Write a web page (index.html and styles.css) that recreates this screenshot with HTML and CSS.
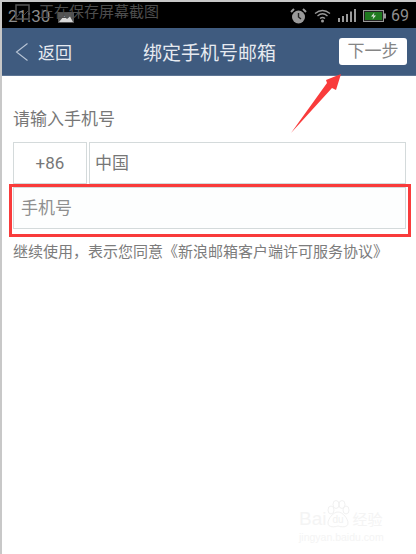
FILE: index.html
```html
<!DOCTYPE html>
<html lang="zh">
<head>
  <meta charset="UTF-8">
  <title>绑定手机号邮箱</title>
  <link rel="stylesheet" href="styles.css">
</head>
<body>
  <div class="screen">
    <div class="status-bar">
      <div class="status-left">
        <span class="clock">21:30</span>
        <svg class="pic-icon" width="16" height="11" viewBox="0 0 16 11">
          <rect x="0" y="0" width="16" height="11" fill="#555"/>
          <path d="M1 10 L6 4 L9 7 L12 4.500 L15 10 Z" fill="#d8d8d8"/>
        </svg>
      </div>
      <div class="toast">
        <svg class="toast-icon" width="15" height="16" viewBox="0 0 15 16">
          <rect x="1" y="1" width="13" height="14" fill="none" stroke="#555" stroke-width="1.500"/>
          <path d="M2 13 L6 8 L9 11 L13 7" fill="none" stroke="#444"/>
        </svg>
        <span>正在保存屏幕截图</span>
      </div>
      <div class="status-right">
        <svg width="17" height="16" viewBox="0 0 17 16">
          <circle cx="8.500" cy="9" r="6.500" fill="#9a9a9a"/>
          <path d="M8.500 5 V9 L11 11" fill="none" stroke="#222" stroke-width="1.400"/>
          <path d="M1 4 L4 1 M16 4 L13 1" stroke="#9a9a9a" stroke-width="2"/>
        </svg>
        <svg width="17" height="14" viewBox="0 0 17 14">
          <path d="M1 4.500 Q8.500 -1.500 16 4.500 M3.500 7 Q8.500 2.500 13.500 7 M6 9.500 Q8.500 7.500 11 9.500" fill="none" stroke="#9a9a9a" stroke-width="1.300"/>
          <circle cx="8.500" cy="12" r="1.500" fill="#9a9a9a"/>
        </svg>
        <svg width="18" height="13" viewBox="0 0 18 13">
          <path d="M0 9h2v4h-2z M4 7h2v6h-2z M8 5h2v8h-2z M12 2.500h2v10.500h-2z M16 0h2v13h-2z" fill="#9a9a9a"/>
        </svg>
        <svg width="23" height="12" viewBox="0 0 23 12">
          <rect x="0.500" y="0.500" width="20" height="11" fill="#222" stroke="#999"/>
          <rect x="2" y="2" width="17" height="8" fill="#1f7a1f"/>
          <rect x="21" y="3.500" width="2" height="5" fill="#999"/>
          <path d="M11.500 2.500 L8 6.500 H10.500 L9.500 9.500 L13 5.500 H10.500 Z" fill="#e8e8e8"/>
        </svg>
        <span class="battery-num">69</span>
      </div>
    </div>

    <div class="top-bar">
      <div class="back">
        <svg width="14" height="20" viewBox="0 0 14 20">
          <path d="M12.500 1.500 L1.500 10 L12.500 18.500" fill="none" stroke="#b9c5d5" stroke-width="1.100"/>
        </svg>
        <span>返回</span>
      </div>
      <div class="title">绑定手机号邮箱</div>
      <div class="next-btn">下一步</div>
    </div>

    <div class="content">
      <p class="label">请输入手机号</p>
      <div class="country-row">
        <div class="field code">+86</div>
        <div class="field country">中国</div>
      </div>
      <div class="field phone">手机号</div>
      <p class="agree">继续使用，表示您同意《新浪邮箱客户端许可服务协议》</p>
    </div>

    <div class="red-box"></div>
    <svg class="arrow" width="54" height="64" viewBox="0 0 54 64">
      <path d="M1 61 L37 11 L36 8 L51 2 L46 18 L42 16 Z" fill="#f93b3b"/>
    </svg>

    <div class="watermark">
      <div class="wm-top">
        <span class="wm-logo">Bai</span>
        <svg class="wm-paw" width="24" height="28" viewBox="0 0 24 28">
          <ellipse cx="5" cy="10" rx="3" ry="4" fill="none" stroke="#f1f1f1"/>
          <ellipse cx="10" cy="4.500" rx="3" ry="4" fill="none" stroke="#f1f1f1"/>
          <ellipse cx="16" cy="4.500" rx="3" ry="4" fill="none" stroke="#f1f1f1"/>
          <ellipse cx="20" cy="10" rx="3" ry="4" fill="none" stroke="#f1f1f1"/>
          <path d="M12 12 C7 12 2 19 2 23 C2 28 9 27 12 26 C15 27 22 28 22 23 C22 19 17 12 12 12 Z" fill="none" stroke="#f1f1f1"/>
          <text x="12" y="23" text-anchor="middle" class="wm-du">du</text>
        </svg>
        <span class="wm-cn">经验</span>
      </div>
      <div class="wm-url">jingyan.baidu.com</div>
    </div>
  </div>
</body>
</html>
```

FILE: styles.css
```css
* {
  box-sizing: border-box;
}

body {
  margin: 0;
  background: #fff;
  font-family: "Roboto", "Noto Sans CJK SC", sans-serif;
  overflow: hidden;
}

.screen {
  position: relative;
  width: 416px;
  height: 554px;
  border-top: 2px solid #c8c8c8;
  border-left: 2px solid #c8c8c8;
  overflow: hidden;
}

.status-bar {
  height: 26px;
  background: #000;
  display: flex;
  justify-content: space-between;
  align-items: center;
  padding: 1px 7px 0 6px;
}

.status-left {
  display: flex;
  align-items: center;
  gap: 8px;
  color: #8b8b8b;
  font-size: 17px;
}

.clock {
  margin-top: 1px;
}

.pic-icon {
  margin-top: 4px;
}

.toast {
  position: absolute;
  left: 13px;
  top: 1px;
  display: flex;
  align-items: center;
  gap: 9px;
  color: #4d4d4d;
  font-size: 15px;
  line-height: 18px;
}

.status-right {
  display: flex;
  align-items: center;
  gap: 7px;
  color: #8f8f8f;
}

.battery-num {
  font-size: 16px;
  margin-left: -2px;
}

.top-bar {
  height: 48px;
  background: #3f5b7f;
  border-bottom: 1px solid #5d7594;
  display: flex;
  align-items: center;
  justify-content: space-between;
  padding: 0 9px 0 13px;
  color: #e6eaf0;
  position: relative;
}

.back {
  display: flex;
  align-items: center;
  gap: 9px;
  font-size: 17px;
}

.title {
  position: absolute;
  left: 141px;
  font-size: 19px;
}

.next-btn {
  width: 68px;
  height: 27px;
  background: #fff;
  border-radius: 3px;
  color: #858585;
  font-size: 17px;
  line-height: 27px;
  text-align: center;
}

.content {
  padding: 0 10px 0 11px;
}

.label {
  margin: 32px 0 12px;
  color: #777;
  font-size: 17px;
  height: 22px;
  line-height: 22px;
}

.country-row {
  display: flex;
  gap: 2px;
}

.field {
  border: 1px solid #d4dadb;
  background: #fff;
  color: #777;
  font-size: 17px;
}

.code {
  width: 74px;
  height: 42px;
  line-height: 40px;
  text-align: center;
}

.country {
  flex: 1;
  height: 42px;
  line-height: 40px;
  padding-left: 5px;
}

.phone {
  height: 42px;
  margin-top: 3px;
  line-height: 40px;
  padding-left: 7px;
  color: #8f8f8f;
  background: #fdfefe;
}

.agree {
  margin: 13px 0 0;
  color: #7c7c7c;
  font-size: 15px;
  line-height: 20px;
  white-space: nowrap;
}

.red-box {
  position: absolute;
  left: 7px;
  top: 182px;
  width: 402px;
  height: 53px;
  border: 3px solid #f93b3b;
}

.arrow {
  position: absolute;
  left: 288px;
  top: 70px;
}

.watermark {
  position: absolute;
  left: 297px;
  top: 498px;
  color: #f4f4f4;
}

.wm-top {
  display: flex;
  align-items: flex-end;
}

.wm-logo {
  font-family: "Liberation Sans", sans-serif;
  font-size: 19px;
  line-height: 18px;
}

.wm-paw {
  display: block;
}

.wm-du {
  font-family: "Liberation Sans", sans-serif;
  font-size: 10px;
  fill: #f1f1f1;
}

.wm-cn {
  font-family: "Noto Sans CJK SC", sans-serif;
  font-size: 15px;
  line-height: 18px;
  margin-left: 2px;
}

.wm-url {
  font-family: "Liberation Sans", sans-serif;
  font-size: 10.500px;
  margin-top: 3px;
}
```
